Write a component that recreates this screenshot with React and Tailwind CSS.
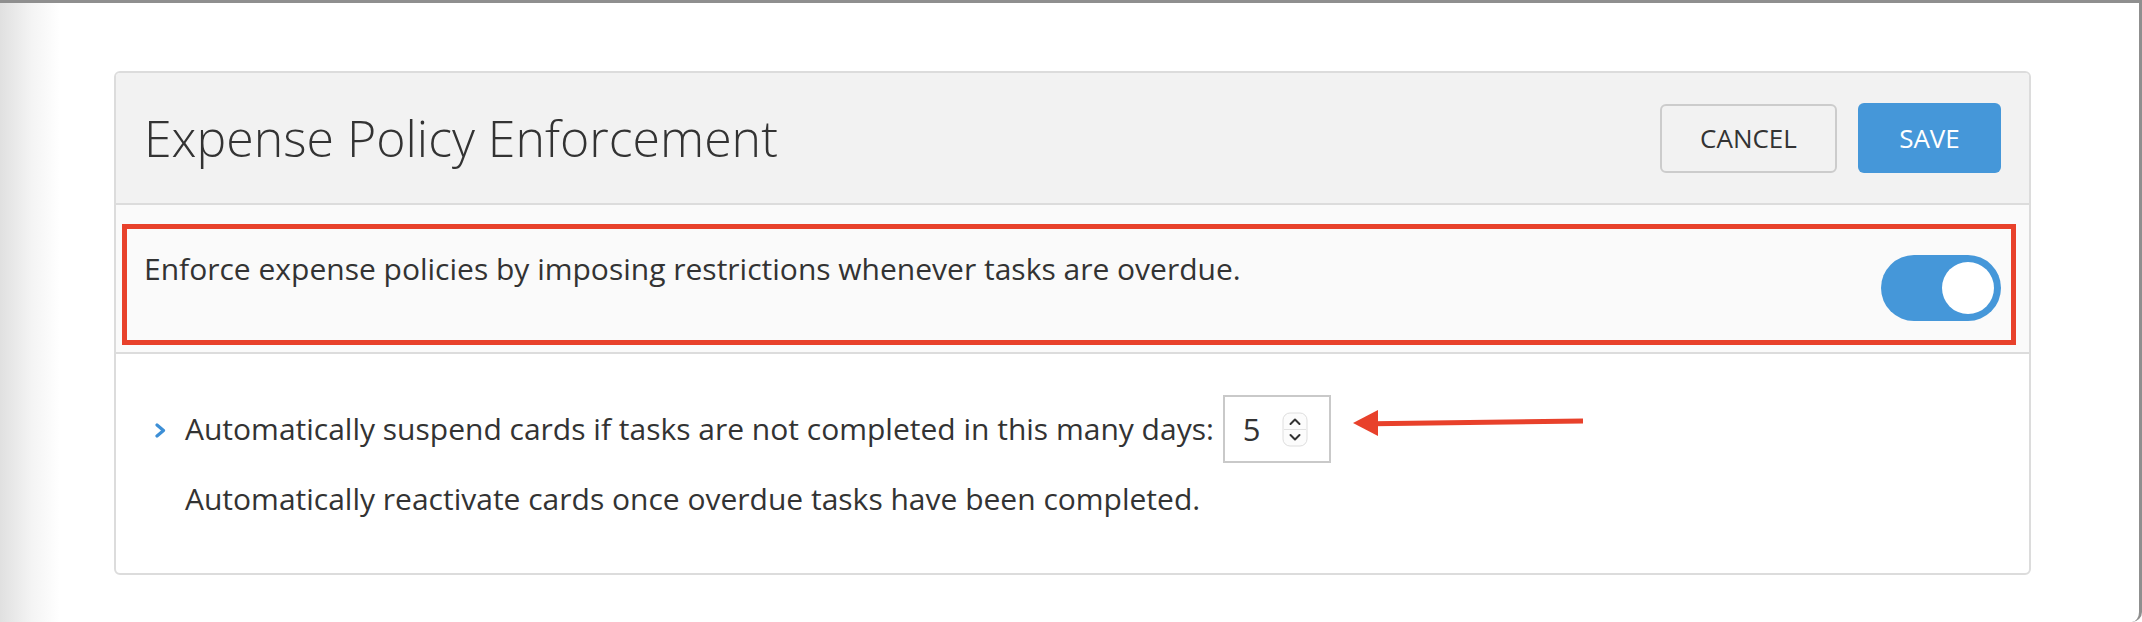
import React from "react";

function Chevron() {
  return (
    <svg width="12" height="15" viewBox="0 0 12 15" className="block">
      <polyline points="3,2 9.5,7.5 3,13" fill="none" stroke="#3d8fd6" strokeWidth="3.2" strokeLinecap="round" strokeLinejoin="round" />
    </svg>
  );
}

function Spinner() {
  return (
    <svg width="26" height="35" viewBox="0 0 26 35" className="block">
      <rect x="1" y="1" width="24" height="33" rx="7" fill="#fcfcfc" stroke="#dedede" strokeWidth="1" />
      <line x1="2" y1="17.5" x2="24" y2="17.5" stroke="#e2e2e2" strokeWidth="1" />
      <polyline points="8.5,12 13,7.5 17.5,12" fill="none" stroke="#333" strokeWidth="2" strokeLinecap="round" strokeLinejoin="round" />
      <polyline points="8.5,23 13,27.5 17.5,23" fill="none" stroke="#333" strokeWidth="2" strokeLinecap="round" strokeLinejoin="round" />
    </svg>
  );
}

function Arrow() {
  return (
    <svg width="232" height="34" viewBox="0 0 232 34" className="block">
      <line x1="20" y1="14.7" x2="230" y2="12" stroke="#e8412b" strokeWidth="5" />
      <polygon points="0,14 25,1 25,27" fill="#e8412b" />
    </svg>
  );
}

export default function App() {
  return (
    <div className="relative h-[622px] w-[2142px] overflow-hidden border-t-[3px] border-r-[3px] border-[#8f8f8f] rounded-br-[10px] bg-[linear-gradient(to_right,#e0e0e0_0px,#f4f4f4_32px,#ffffff_60px)] font-['Open_Sans','Liberation_Sans',sans-serif] text-[#333333]">
      <div className="pl-[114px] pr-[108px] pt-[68px]">
        <div className="overflow-hidden rounded-[6px] border-2 border-[#dcdcdc] bg-white">
          {/* Header */}
          <div className="flex h-[132px] items-center justify-between border-b-2 border-[#dcdcdc] bg-[#f2f2f2] px-[28px]">
            <h1 className="text-[50px] font-light leading-[68px]">Expense Policy Enforcement</h1>
            <div className="flex items-center gap-[21px]">
              <button className="flex h-[69px] w-[177px] items-center justify-center rounded-[6px] border-2 border-[#cccccc] bg-[#f2f2f2] text-[26px] text-[#333]">
                CANCEL
              </button>
              <button className="flex h-[70px] w-[143px] items-center justify-center rounded-[6px] bg-[#4597d9] text-[26px] text-white">
                SAVE
              </button>
            </div>
          </div>

          {/* Toggle section */}
          <div className="relative flex items-start justify-between border-b-2 border-[#dcdcdc] bg-[#fafafa] px-[28px] pb-[31px] pt-[41px]">
            <p className="text-[30px] leading-[46px]">
              Enforce expense policies by imposing restrictions whenever tasks are overdue.
            </p>
            <div className="relative mt-[9px] h-[66px] w-[120px] rounded-full bg-[#4597d9]">
              <div className="absolute right-[7px] top-[7px] h-[52px] w-[52px] rounded-full bg-white" />
            </div>
            <div className="pointer-events-none absolute bottom-[7px] left-[6px] right-[13px] top-[19px] border-[5px] border-[#e8412b]" />
          </div>

          {/* Settings section */}
          <div className="px-[28px] pb-[51px] pt-[41px]">
            <div className="flex items-center">
              <div className="flex w-[41px] items-center pl-[10px] pt-[2px]">
                <Chevron />
              </div>
              <span className="text-[30px] leading-[46px]">
                Automatically suspend cards if tasks are not completed in this many days:
              </span>
              <div className="ml-[9px] flex h-[68px] w-[108px] items-center border-2 border-[#c9c9c9] bg-white pl-[18px]">
                <span className="text-[31px] leading-none">5</span>
                <div className="ml-[21px]">
                  <Spinner />
                </div>
              </div>
              <div className="ml-[22px] -mt-[6px]">
                <Arrow />
              </div>
            </div>
            <p className="mt-[13px] pl-[41px] text-[30px] leading-[46px]">
              Automatically reactivate cards once overdue tasks have been completed.
            </p>
          </div>
        </div>
      </div>
    </div>
  );
}
